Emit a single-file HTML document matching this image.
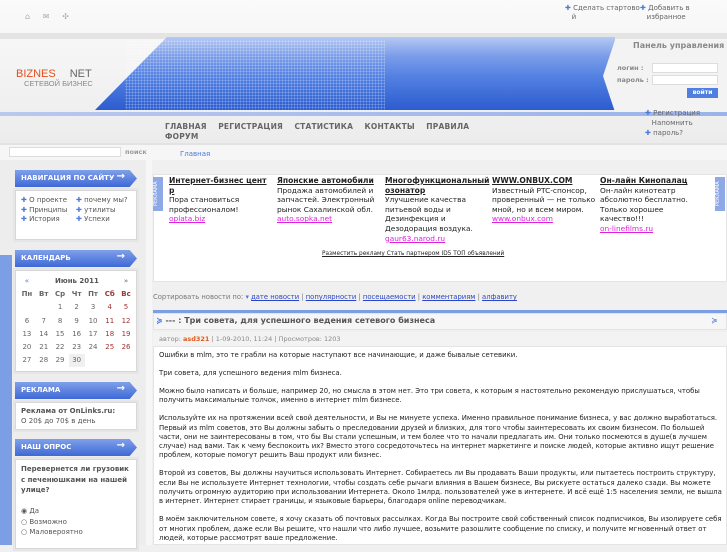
<!DOCTYPE html>
<html><head><meta charset="utf-8"><style>
*{margin:0;padding:0;box-sizing:border-box}
body{width:727px;height:545px;overflow:hidden;background:#f0f0f0;font-family:"DejaVu Sans","Liberation Sans",sans-serif;position:relative;color:#333}
.a{position:absolute}
.box{position:absolute;left:15px;width:122px;background:#fff;border:1px solid #d8d8d8;outline:2px solid #e6e6e6}
.hd{position:absolute;left:15px;width:122px;height:17px;background:linear-gradient(#7fa0ea,#3f68d6);color:#fff;font-size:7px;font-weight:bold;padding:4px 6px;clip-path:polygon(0 0,94% 0,100% 50%,94% 100%,0 100%)}
.hd:after{content:"\2192";position:absolute;right:12px;top:1px;font-size:10px}
.nv{font-size:7px;color:#555;line-height:9.5px}
.nv span{color:#4a79d8}
.cal{font-size:7px;color:#666;text-align:center;border-collapse:collapse;width:116px}
.cal td{height:13.3px}
.r{color:#9b3434}
.ad{position:absolute;top:176px;width:108px;font-size:7.4px;line-height:9.6px;color:#222}
.ad b{text-decoration:underline;font-size:7.6px;display:block;white-space:nowrap;overflow:hidden}
.ad i{font-style:normal;color:#e020e0;text-decoration:underline}
.art{position:absolute;left:159px;top:351px;width:563px;font-size:6.9px;line-height:9.3px;color:#222}
.art p{margin-bottom:8.7px}
.menu{font-size:7.5px;font-weight:bold;color:#666;letter-spacing:.2px}
</style></head><body>
<div class="a" style="left:0;top:0;width:727px;height:145px;background:linear-gradient(#fafafa,#ececec)"></div>
<div class="a" style="left:0;top:33px;width:727px;height:6px;background:#e4e4e4"></div>
<div class="a" style="left:0;top:112px;width:727px;height:4px;background:linear-gradient(90deg,#b8c8ee,#9ab3ea)"></div>
<div class="a" style="left:95px;top:37px;width:520px;height:73px;background:linear-gradient(#b5c9f3 0%,#7d9ee9 25%,#5280e2 55%,#2c5ccf 100%);clip-path:polygon(72px 0,100% 0,100% 100%,0 100%)"></div>
<div class="a" style="left:125px;top:40px;width:260px;height:70px;opacity:.35;background-image:radial-gradient(#fff 0.8px,transparent 1px);background-size:3px 3px"></div>
<div class="a" style="left:603px;top:40px;width:124px;height:72px;background:#f3f3f3;clip-path:polygon(12px 0,100% 0,100% 100%,12px 100%,0 50%,12px 0)"></div>
<div class="a" style="left:16px;top:68px;font-size:11px;color:#e0501e;font-family:'Liberation Sans',sans-serif">BIZNES<span style="color:#666;margin-left:14px">NET</span></div>
<div class="a" style="left:24px;top:79px;font-size:7.5px;color:#888;font-family:'Liberation Sans',sans-serif">СЕТЕВОЙ БИЗНЕС</div>
<div class="a" style="left:25px;top:12px;font-size:8px;color:#aaa">⌂ &nbsp;&nbsp;&nbsp;&nbsp;✉ &nbsp;&nbsp;&nbsp;&nbsp;✣</div>
<div class="a" style="left:565px;top:4px;font-size:7px;color:#666;line-height:9px;width:80px"><span style="color:#4a79d8">✚</span> Сделать стартово<br>&nbsp;&nbsp;&nbsp;й</div>
<div class="a" style="left:640px;top:4px;font-size:7px;color:#666;line-height:9px"><span style="color:#4a79d8">✚</span> Добавить в<br>&nbsp;&nbsp;&nbsp;избранное</div>
<div class="a" style="left:633px;top:41px;font-size:8px;color:#888;font-weight:bold">Панель управления</div>
<div class="a" style="left:617px;top:64px;font-size:6.5px;color:#888;font-weight:bold">логин :</div>
<div class="a" style="left:617px;top:76px;font-size:6.5px;color:#888;font-weight:bold">пароль :</div>
<div class="a" style="left:652px;top:63px;width:66px;height:10px;background:#fff;border:1px solid #ddd"></div>
<div class="a" style="left:652px;top:75px;width:66px;height:10px;background:#fff;border:1px solid #ddd"></div>
<div class="a" style="left:687px;top:88px;width:31px;height:10px;background:#4f7fe0;color:#fff;font-size:6px;font-weight:bold;text-align:center;line-height:10px">войти</div>
<div class="a" style="left:645px;top:108px;font-size:7px;color:#666;line-height:10px"><span style="color:#4a79d8">✚</span> Регистрация<br>&nbsp;&nbsp;&nbsp;Напомнить<br><span style="color:#4a79d8">✚</span> пароль?</div>
<div class="a menu" style="left:165px;top:122px;word-spacing:1px">ГЛАВНАЯ &nbsp; РЕГИСТРАЦИЯ &nbsp; СТАТИСТИКА &nbsp; КОНТАКТЫ &nbsp; ПРАВИЛА</div>
<div class="a menu" style="left:165px;top:132px">ФОРУМ</div>
<div class="a" style="left:0;top:143px;width:727px;height:17px;background:#f6f6f6;border-top:2px solid #e2e2e2"></div>
<div class="a" style="left:9px;top:147px;width:112px;height:10px;background:#fff;border:1px solid #ddd"></div>
<div class="a" style="left:125px;top:148px;font-size:6.5px;color:#999;font-weight:bold">поиск</div>
<div class="a" style="left:180px;top:150px;font-size:7px;color:#4a79d8">Главная</div>
<div class="a" style="left:0;top:160px;width:146px;height:385px;background:#ededed"></div>
<div class="a" style="left:0;top:255px;width:12px;height:290px;background:#7b9ee4"></div>
<div class="a" style="left:146px;top:160px;width:6px;height:385px;background:#f7f7f7"></div>

<div class="hd" style="top:170px">НАВИГАЦИЯ ПО САЙТУ</div>
<div class="box" style="top:190px;height:50px;padding:5px 4px">
<div class="nv" style="position:absolute;left:5px;top:5px"><span>✚</span> О проекте<br><span>✚</span> Принципы<br><span>✚</span> История</div>
<div class="nv" style="position:absolute;left:60px;top:5px"><span>✚</span> почему мы?<br><span>✚</span> утилиты<br><span>✚</span> Успехи</div>
</div>
<div class="hd" style="top:250px">КАЛЕНДАРЬ</div>
<div class="box" style="top:270px;height:102px;padding:3px 2px">
<table class="cal"><tr><td style="color:#4a79d8">«</td><td colspan="5" style="font-weight:bold;color:#555">Июнь 2011</td><td>»</td></tr>
<tr style="font-weight:bold"><td>Пн</td><td>Вт</td><td>Ср</td><td>Чт</td><td>Пт</td><td class="r">Сб</td><td class="r">Вс</td></tr>
<tr><td></td><td></td><td>1</td><td>2</td><td>3</td><td class="r">4</td><td class="r">5</td></tr>
<tr><td>6</td><td>7</td><td>8</td><td>9</td><td>10</td><td class="r">11</td><td class="r">12</td></tr>
<tr><td>13</td><td>14</td><td>15</td><td>16</td><td>17</td><td class="r">18</td><td class="r">19</td></tr>
<tr><td>20</td><td>21</td><td>22</td><td>23</td><td>24</td><td class="r">25</td><td class="r">26</td></tr>
<tr><td>27</td><td>28</td><td>29</td><td style="background:#f0f0f0">30</td><td></td><td></td><td></td></tr></table>
</div>
<div class="hd" style="top:382px">РЕКЛАМА</div>
<div class="box" style="top:402px;height:28px;padding:3px 5px;font-size:7px;line-height:10px;color:#555"><b>Реклама от OnLinks.ru:</b><br>О 20$ до 70$ в день</div>
<div class="hd" style="top:439px">НАШ ОПРОС</div>
<div class="box" style="top:459px;height:90px;padding:4px 5px;font-size:7px;line-height:10.5px;color:#555"><b>Перевернется ли грузовик с печенюшками на нашей улице?</b><br><br>
<span>◉ Да<br>○ Возможно<br>○ Маловероятно</span></div>
<div class="a" style="left:152px;top:160px;width:575px;height:385px;background:#f0f0f0"></div>
<div class="a" style="left:153px;top:174px;width:574px;height:108px;background:#fff;border:1px solid #e4e4e4"></div>
<div class="a" style="left:153px;top:177px;width:10px;height:34px;background:#8fa9e6;color:#fff;font-size:5px;writing-mode:vertical-rl;transform:rotate(180deg);text-align:center">РЕКЛАМА</div>
<div class="a" style="left:715px;top:177px;width:10px;height:34px;background:#8fa9e6;color:#fff;font-size:5px;writing-mode:vertical-rl;transform:rotate(180deg);text-align:center">РЕКЛАМА</div>
<div class="ad" style="left:169px"><b>Интернет-бизнес цент</b><b>р</b>Пора становиться профессионалом!<br><i>oplata.biz</i></div>
<div class="ad" style="left:277px"><b>Японские автомобили</b>Продажа автомобилей и запчастей. Электронный рынок Сахалинской обл.<br><i>auto.sopka.net</i></div>
<div class="ad" style="left:385px"><b>Многофункциональный</b><b>озонатор</b>Улучшение качества питьевой воды и Дезинфекция и Дезодорация воздука.<br><i>gaur63.narod.ru</i></div>
<div class="ad" style="left:492px"><b>WWW.ONBUX.COM</b>Известный PTC-спонсор, проверенный — не только мной, но и всем миром.<br><i>www.onbux.com</i></div>
<div class="ad" style="left:600px;width:100px"><b>Он-лайн Кинопалац</b>Он-лайн кинотеатр абсолютно бесплатно. Только хорошее качество!!!<br><i>on-linefilms.ru</i></div>
<div class="a" style="left:322px;top:251px;font-size:5.8px;color:#222;text-decoration:underline">Разместить рекламу Стать партнером ID5 ТОП объявлений</div>
<div class="a" style="left:153px;top:293px;font-size:6.8px;color:#777">Сортировать новости по: <span style="color:#4a79d8">▾</span> <u style="color:#2a45c8">дате новости</u> | <u style="color:#2a45c8">популярности</u> | <u style="color:#2a45c8">посещаемости</u> | <u style="color:#2a45c8">комментариям</u> | <u style="color:#2a45c8">алфавиту</u></div>
<div class="a" style="left:153px;top:310px;width:574px;height:3px;background:#7b9ee4"></div>
<div class="a" style="left:153px;top:313px;width:574px;height:17px;background:#f6f6f6;border:1px solid #e4e4e4"></div>
<div class="a" style="left:156px;top:316px;font-size:8px;font-weight:bold;color:#555"><span style="color:#4a79d8">≽</span> --- : Три совета, для успешного ведения сетевого бизнеса</div>
<div class="a" style="left:711px;top:316px;font-size:8px;color:#4a79d8">≽</div>
<div class="a" style="left:153px;top:332px;width:574px;height:14px;background:#f3f3f3"></div>
<div class="a" style="left:159px;top:335px;font-size:6.5px;color:#888">автор: <b style="color:#e05a1a">asd321</b> | 1-09-2010, 11:24 | Просмотров: 1203</div>
<div class="a" style="left:153px;top:346px;width:574px;height:199px;background:#fff;border:1px solid #e4e4e4"></div>
<div class="art">
<p>Ошибки в mlm, это те грабли на которые наступают все начинающие, и даже бывалые сетевики.</p>
<p>Три совета, для успешного ведения mlm бизнеса.</p>
<p>Можно было написать и больше, например 20, но смысла в этом нет. Это три совета, к которым я настоятельно рекомендую прислушаться, чтобы получить максимальные толчок, именно в интернет mlm бизнесе.</p>
<p>Используйте их на протяжении всей свой деятельности, и Вы не минуете успеха. Именно правильное понимание бизнеса, у вас должно выработаться. Первый из mlm советов, это Вы должны забыть о преследовании друзей и близких, для того чтобы заинтересовать их своим бизнесом. По большей части, они не заинтересованы в том, что бы Вы стали успешным, и тем более что то начали предлагать им. Они только посмеются в душе(в лучшем случае) над вами. Так к чему беспокоить их? Вместо этого сосредоточьтесь на интернет маркетинге и поиске людей, которые активно ищут решение проблем, которые помогут решить Ваш продукт или бизнес.</p>
<p>Второй из советов, Вы должны научиться использовать Интернет. Собираетесь ли Вы продавать Ваши продукты, или пытаетесь построить структуру, если Вы не используете Интернет технологии, чтобы создать себе рычаги влияния в Вашем бизнесе, Вы рискуете остаться далеко сзади. Вы можете получить огромную аудиторию при использовании Интернета. Около 1млрд. пользователей уже в интернете. И всё ещё 1:5 населения земли, не вышла в интернет. Интернет стирает границы, и языковые барьеры, благодаря online переводчикам.</p>
<p>В моём заключительном совете, я хочу сказать об почтовых рассылках. Когда Вы построите свой собственный список подписчиков, Вы изолируете себя от многих проблем, даже если Вы решите, что нашли что либо лучшее, возьмите разошлите сообщение по списку, и получите мгновенный ответ от людей, которые рассмотрят ваше предложение.</p>
</div>
</body></html>
